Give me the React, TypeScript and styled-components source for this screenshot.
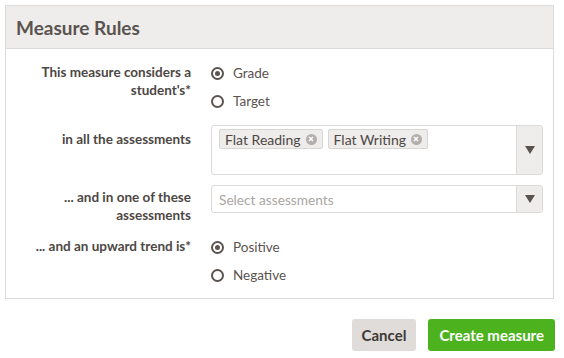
import React from "react";
import styled, { createGlobalStyle } from "styled-components";

const GlobalStyle = createGlobalStyle`
  body {
    margin: 0;
    background: #ffffff;
    font-family: "Lato", "Noto Sans", sans-serif;
    color: #4d4744;
  }
`;

const Page = styled.div`
  width: 564px;
  padding: 5px 10px 0 5px;
  box-sizing: border-box;
`;

const Panel = styled.section`
  border: 1px solid #dcdad8;
`;

const Header = styled.div`
  height: 42px;
  display: flex;
  align-items: center;
  padding-left: 10px;
  background: #eeedeb;
  border-bottom: 1px solid #dcdad8;
`;

const Title = styled.h2`
  margin: 0;
  font-size: 19px;
  font-weight: 700;
  color: #5a534f;
`;

const Body = styled.div`
  display: flex;
  flex-direction: column;
  padding: 10px 10px 9px 0;
`;

const Row = styled.div<{ $gap?: number }>`
  display: grid;
  grid-template-columns: 185px 1fr;
  column-gap: 20px;
  margin-top: ${(p) => p.$gap ?? 0}px;
`;

const Label = styled.div<{ $top?: number }>`
  text-align: right;
  font-size: 13.5px;
  font-weight: 700;
  line-height: 17.5px;
  color: #4d4744;
  padding-top: ${(p) => p.$top ?? 5}px;
`;

const RadioGroup = styled.div`
  display: flex;
  flex-direction: column;
`;

const RadioOption = styled.label`
  height: 28px;
  display: flex;
  align-items: center;
  gap: 9px;
  font-size: 13.5px;
  color: #5a534f;
`;

const RadioCircle = styled.span<{ $checked?: boolean }>`
  width: 13px;
  height: 13px;
  box-sizing: border-box;
  border: 2px solid #5a534f;
  border-radius: 50%;
  display: flex;
  align-items: center;
  justify-content: center;
  &::after {
    content: "";
    width: 5px;
    height: 5px;
    border-radius: 50%;
    background: ${(p) => (p.$checked ? "#5a534f" : "transparent")};
  }
`;

const SelectBox = styled.div<{ $tall?: boolean }>`
  display: flex;
  height: ${(p) => (p.$tall ? 50 : 28)}px;
  box-sizing: border-box;
  border: 1px solid #dcdad8;
  border-radius: 3px;
  overflow: hidden;
`;

const SelectValue = styled.div<{ $tall?: boolean }>`
  flex: 1;
  display: flex;
  align-items: ${(p) => (p.$tall ? "flex-start" : "center")};
  gap: 5px;
  padding: ${(p) => (p.$tall ? "3px 7px" : "0 7px")};
`;

const Placeholder = styled.span`
  font-size: 13.7px;
  color: #aaa6a3;
`;

const Tag = styled.span`
  height: 20px;
  box-sizing: border-box;
  display: inline-flex;
  align-items: center;
  gap: 5px;
  padding: 0 5px 0 5px;
  background: #eeedeb;
  border: 1px solid #d8d6d3;
  border-radius: 2px;
  font-size: 14px;
  color: #4d4744;
`;

const TagRemove = styled.span`
  width: 11px;
  height: 11px;
  border-radius: 50%;
  background: #b3afac;
  display: flex;
  align-items: center;
  justify-content: center;
`;

const ArrowCell = styled.div`
  width: 25px;
  display: flex;
  align-items: center;
  justify-content: center;
  background: #eeedeb;
  border-left: 1px solid #dcdad8;
`;

const Footer = styled.div`
  display: flex;
  justify-content: flex-end;
  gap: 12px;
  margin-top: 20px;
  margin-right: -1px;
`;

const Button = styled.button<{ $primary?: boolean }>`
  height: 32px;
  padding: 0 ${(p) => (p.$primary ? 11 : 10)}px;
  border: none;
  border-radius: 3px;
  font-family: inherit;
  font-size: 15px;
  font-weight: 700;
  background: ${(p) => (p.$primary ? "#4cb21e" : "#e0dcda")};
  color: ${(p) => (p.$primary ? "#ffffff" : "#3e3936")};
`;

const Arrow = () => (
  <svg width="10" height="8" viewBox="0 0 10 8">
    <path d="M0 0 L10 0 L5 8 Z" fill="#5a534f" />
  </svg>
);

const Cross = () => (
  <svg width="6" height="6" viewBox="0 0 6 6">
    <path d="M1 1 L5 5 M5 1 L1 5" stroke="#ffffff" strokeWidth="1.5" />
  </svg>
);

const Radio: React.FC<{ label: string; checked?: boolean }> = ({ label, checked }) => (
  <RadioOption>
    <RadioCircle $checked={checked} />
    {label}
  </RadioOption>
);

export default function App() {
  return (
    <Page>
      <GlobalStyle />
      <Panel>
        <Header>
          <Title>Measure Rules</Title>
        </Header>
        <Body>
          <Row>
            <Label>
              This measure considers a
              <br />
              student's*
            </Label>
            <RadioGroup>
              <Radio label="Grade" checked />
              <Radio label="Target" />
            </RadioGroup>
          </Row>
          <Row $gap={10}>
            <Label $top={6}>in all the assessments</Label>
            <SelectBox $tall>
              <SelectValue $tall>
                {["Flat Reading", "Flat Writing"].map((t) => (
                  <Tag key={t}>
                    {t}
                    <TagRemove>
                      <Cross />
                    </TagRemove>
                  </Tag>
                ))}
              </SelectValue>
              <ArrowCell>
                <Arrow />
              </ArrowCell>
            </SelectBox>
          </Row>
          <Row $gap={10}>
            <Label $top={4}>
              ... and in one of these
              <br />
              assessments
            </Label>
            <SelectBox>
              <SelectValue>
                <Placeholder>Select assessments</Placeholder>
              </SelectValue>
              <ArrowCell>
                <Arrow />
              </ArrowCell>
            </SelectBox>
          </Row>
          <Row $gap={9}>
            <Label>... and an upward trend is*</Label>
            <RadioGroup>
              <Radio label="Positive" checked />
              <Radio label="Negative" />
            </RadioGroup>
          </Row>
        </Body>
      </Panel>
      <Footer>
        <Button>Cancel</Button>
        <Button $primary>Create measure</Button>
      </Footer>
    </Page>
  );
}
